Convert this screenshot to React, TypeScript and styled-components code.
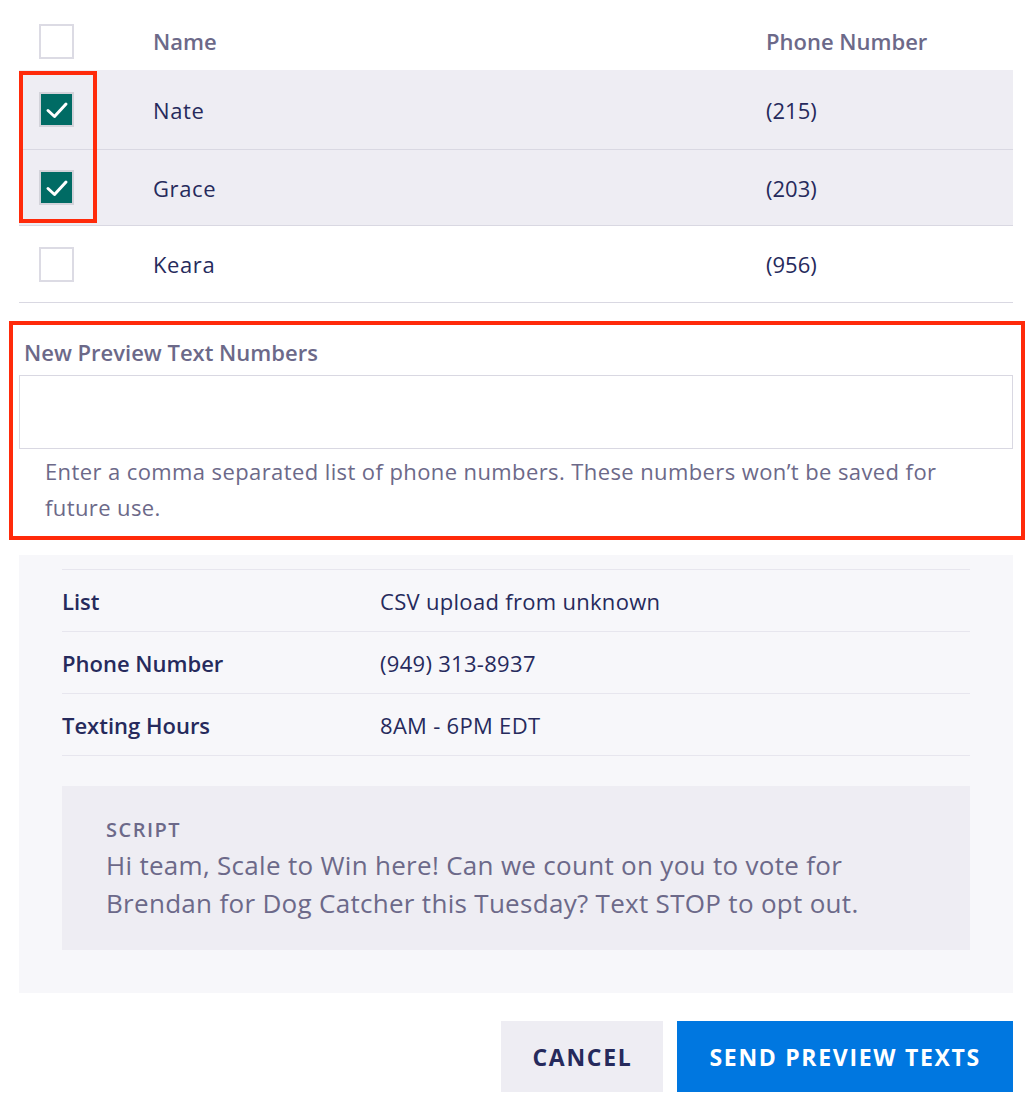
import React from 'react';
import styled, { createGlobalStyle } from 'styled-components';

const NAVY = '#262a5c';
const MUTED = '#6c6989';
const SHADE = '#eeedf3';
const LINE = '#d9d8e2';
const ALERT = '#ff2a0a';

const GlobalStyle = createGlobalStyle`
	html, body {
		margin: 0;
		padding: 0;
		background: #ffffff;
	}
	body {
		font-family: 'Open Sans', 'Noto Sans', sans-serif;
		color: ${NAVY};
	}
`;

type Contact = { name: string; phone: string; checked: boolean };

const contacts: Contact[] = [
	{ name: 'Nate', phone: '(215)', checked: true },
	{ name: 'Grace', phone: '(203)', checked: true },
	{ name: 'Keara', phone: '(956)', checked: false },
];

const details = [
	{ label: 'List', value: 'CSV upload from unknown' },
	{ label: 'Phone Number', value: '(949) 313-8937' },
	{ label: 'Texting Hours', value: '8AM - 6PM EDT' },
];

const Check = () => (
	<svg width="24" height="20" viewBox="0 0 24 20" fill="none">
		<path d="M3 10.5 L9.5 16.5 L21 4" stroke="#ffffff" strokeWidth="3" strokeLinecap="round" strokeLinejoin="round" />
	</svg>
);

const App = () => (
	<>
		<GlobalStyle />
		<Page>
			<Table>
				<HeaderRow>
					<BoxCell>
						<Box />
					</BoxCell>
					<HeadCell>Name</HeadCell>
					<HeadCell>Phone Number</HeadCell>
				</HeaderRow>
				<Body>
					{contacts.map((c) => (
						<Row key={c.name} $selected={c.checked}>
							<BoxCell>
								<Box $checked={c.checked}>{c.checked && <Check />}</Box>
							</BoxCell>
							<Cell>{c.name}</Cell>
							<PhoneCell>{c.phone}</PhoneCell>
						</Row>
					))}
					<CheckboxHighlight />
				</Body>
			</Table>

			<PreviewSection>
				<FieldLabel>New Preview Text Numbers</FieldLabel>
				<Input type="text" />
				<Helper>Enter a comma separated list of phone numbers. These numbers won’t be saved for future use.</Helper>
			</PreviewSection>

			<Summary>
				<DetailList>
					{details.map((d) => (
						<DetailRow key={d.label}>
							<DetailLabel>{d.label}</DetailLabel>
							<DetailValue>{d.value}</DetailValue>
						</DetailRow>
					))}
				</DetailList>
				<ScriptBox>
					<ScriptTitle>Script</ScriptTitle>
					<ScriptText>
						Hi team, Scale to Win here! Can we count on you to vote for Brendan for Dog Catcher this Tuesday? Text STOP to opt out.
					</ScriptText>
				</ScriptBox>
			</Summary>

			<Actions>
				<Button>Cancel</Button>
				<Button $primary>Send Preview Texts</Button>
			</Actions>
		</Page>
	</>
);

const Page = styled.div`
	width: 994px;
	margin-left: 19px;
	padding-bottom: 24px;
`;

const Table = styled.div`
	display: flex;
	flex-direction: column;
`;

const rowGrid = `
	display: grid;
	grid-template-columns: 134px 613px 1fr;
	align-items: center;
`;

const HeaderRow = styled.div`
	${rowGrid}
	height: 70px;
	padding-top: 12px;
	box-sizing: border-box;
`;

const Body = styled.div`
	position: relative;
`;

const Row = styled.div<{ $selected?: boolean }>`
	${rowGrid}
	box-sizing: border-box;
	height: 76px;
	background: ${(p) => (p.$selected ? SHADE : '#ffffff')};
	border-bottom: 1px solid ${LINE};
	&:first-child {
		height: 80px;
	}
	&:nth-child(3) {
		height: 77px;
	}
`;

const BoxCell = styled.div`
	padding-left: 20px;
	display: flex;
	align-items: center;
`;

const Box = styled.div<{ $checked?: boolean }>`
	width: 35px;
	height: 35px;
	box-sizing: border-box;
	border: 2px solid ${(p) => (p.$checked ? '#d3d3da' : '#dcdbe4')};
	background: ${(p) => (p.$checked ? '#006b64' : '#ffffff')};
	display: flex;
	align-items: center;
	justify-content: center;
`;

const HeadCell = styled.div`
	font-size: 22px;
	font-weight: 600;
	color: ${MUTED};
`;

const Cell = styled.div`
	font-size: 22px;
	color: ${NAVY};
	letter-spacing: 0.6px;
`;

const PhoneCell = styled.div`
	font-size: 22px;
	color: ${NAVY};
	white-space: nowrap;
`;

const CheckboxHighlight = styled.div`
	position: absolute;
	left: 0;
	top: 1px;
	width: 78px;
	height: 152px;
	box-sizing: border-box;
	border: 4px solid ${ALERT};
	pointer-events: none;
`;

const PreviewSection = styled.section`
	position: relative;
	margin-top: 34px;
	padding-bottom: 11px;
	&::after {
		content: '';
		position: absolute;
		left: -10px;
		right: -12px;
		top: -16px;
		bottom: -4px;
		border: 4px solid ${ALERT};
		pointer-events: none;
	}
`;

const FieldLabel = styled.label`
	display: block;
	padding-left: 5px;
	font-size: 22px;
	font-weight: 600;
	color: ${MUTED};
	line-height: 30px;
	margin-bottom: 8px;
`;

const Input = styled.input`
	display: block;
	width: 100%;
	height: 74px;
	box-sizing: border-box;
	border: 1px solid ${LINE};
	outline: none;
	margin: 0;
`;

const Helper = styled.p`
	margin: 4px 0 0;
	padding: 0 30px 0 26px;
	font-size: 22px;
	line-height: 36px;
	color: ${MUTED};
	letter-spacing: 0.4px;
`;

const Summary = styled.div`
	margin-top: 19px;
	background: #f7f7fa;
	padding: 14px 43px 43px;
`;

const DetailList = styled.div`
	border-top: 1px solid #e7e6ee;
	margin-bottom: 30px;
`;

const DetailRow = styled.div`
	display: grid;
	grid-template-columns: 318px 1fr;
	align-items: center;
	box-sizing: border-box;
	height: 62px;
	border-bottom: 1px solid #e7e6ee;
`;

const DetailLabel = styled.div`
	font-size: 22px;
	font-weight: 600;
	color: ${NAVY};
`;

const DetailValue = styled.div`
	font-size: 22px;
	color: ${NAVY};
	letter-spacing: 0.3px;
`;

const ScriptBox = styled.div`
	background: ${SHADE};
	padding: 30px 44px 28px;
`;

const ScriptTitle = styled.div`
	font-size: 20px;
	font-weight: 600;
	text-transform: uppercase;
	letter-spacing: 1.5px;
	color: ${MUTED};
	line-height: 28px;
	margin-bottom: 2px;
`;

const ScriptText = styled.p`
	margin: 0;
	font-size: 26px;
	line-height: 38px;
	color: ${MUTED};
	letter-spacing: 0.3px;
`;

const Actions = styled.div`
	display: flex;
	justify-content: flex-end;
	gap: 14px;
	margin-top: 28px;
`;

const Button = styled.button<{ $primary?: boolean }>`
	height: 71px;
	padding: 0 ${(p) => (p.$primary ? '32px' : '31px')};
	border: none;
	border-radius: 0;
	background: ${(p) => (p.$primary ? '#0077e0' : SHADE)};
	color: ${(p) => (p.$primary ? '#ffffff' : NAVY)};
	font-family: 'Open Sans', 'Noto Sans', sans-serif;
	font-size: 23px;
	font-weight: 700;
	letter-spacing: 1.7px;
	text-transform: uppercase;
	cursor: pointer;
`;

export default App;
